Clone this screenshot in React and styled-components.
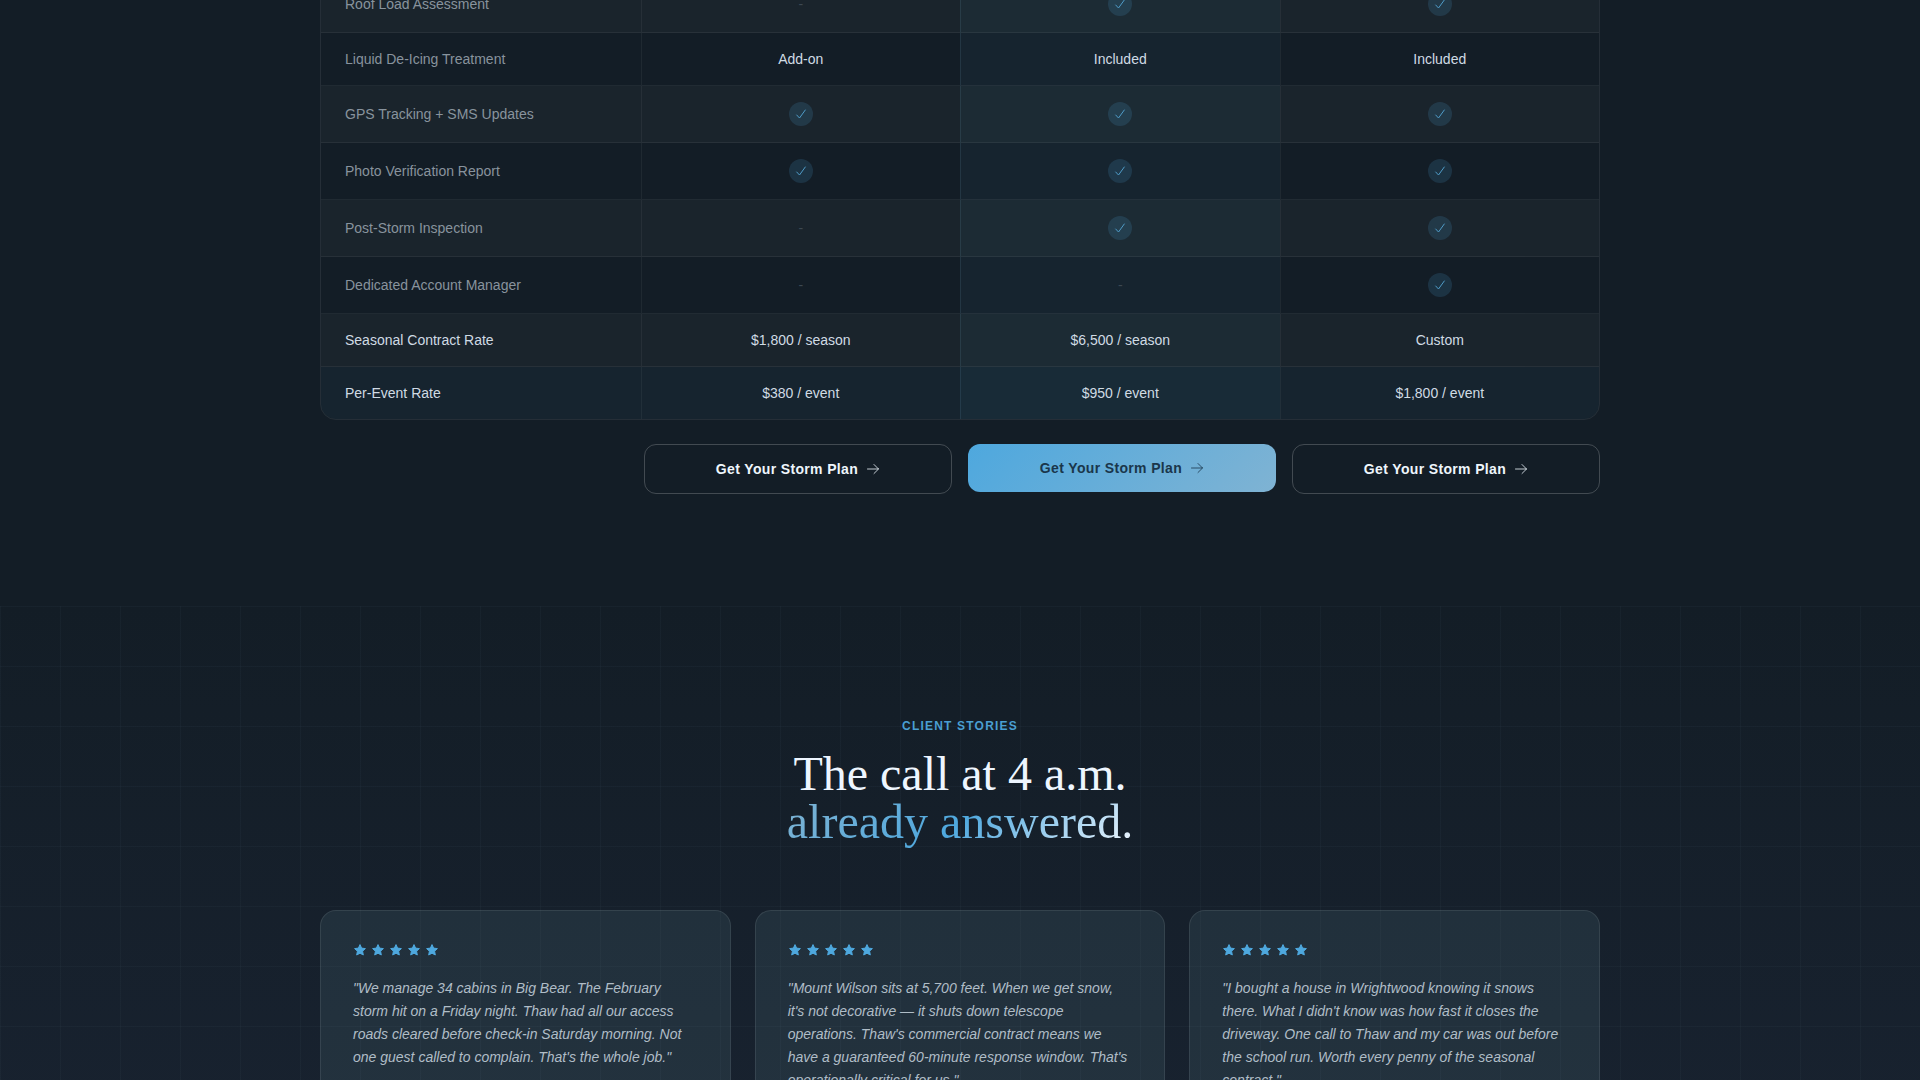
import React from "react";
import styled, { createGlobalStyle, css } from "styled-components";

const GlobalStyle = createGlobalStyle`
  *,
  *::before,
  *::after {
    box-sizing: border-box;
  }

  body {
    margin: 0;
    background: #131d26;
    color: #e6f1fa;
    font-family: "Liberation Sans", Arial, sans-serif;
    font-size: 14px;
  }
`;

const Page = styled.main`
  height: 100vh;
  overflow: hidden;
`;

const Container = styled.div`
  width: 100%;
  max-width: 1280px;
  margin: 0 auto;
`;

const PlansSection = styled.section`
  padding-bottom: 112px;
  background: #131d26;
`;

/* scrolled so that the first visible row is cut by the window edge */
const TableFrame = styled.div`
  margin-top: -25px;
  border: 1px solid rgba(255, 255, 255, 0.08);
  border-radius: 16px;
  overflow: hidden;
`;

const Table = styled.table`
  width: 100%;
  table-layout: fixed;
  border-collapse: separate;
  border-spacing: 0;
`;

const Row = styled.tr`
  background: ${({ $tone }) =>
    $tone === "event"
      ? "rgba(78, 168, 222, 0.05)"
      : $tone === "light"
        ? "rgba(255, 255, 255, 0.03)"
        : "transparent"};

  &:not(:last-child) > * {
    border-bottom: 1px solid rgba(255, 255, 255, 0.06);
  }
`;

const Feature = styled.th`
  padding: 16px 24px;
  text-align: left;
  font-weight: 400;
  line-height: 20px;
  color: ${({ $strong }) => ($strong ? "#d0dbe4" : "#88939d")};
`;

const Cell = styled.td`
  padding: ${({ $tick }) => ($tick ? "16px 24px" : "0 24px")};
  text-align: center;
  line-height: ${({ $tick }) => ($tick ? "24px" : "20px")};
  color: #d0dbe4;
  border-left: 1px solid rgba(255, 255, 255, 0.05);
  ${({ $featured }) =>
    $featured &&
    css`
      background: rgba(78, 168, 222, 0.05);
      border-left-color: rgba(126, 180, 211, 0.12);
    `}
`;

const Tick = styled.span`
  display: inline-flex;
  align-items: center;
  justify-content: center;
  width: 24px;
  height: 24px;
  border-radius: 50%;
  background: rgba(78, 168, 222, 0.16);
  color: #4f9cc8;
  vertical-align: top;
`;

const Dash = styled.span`
  color: #3c4852;
`;

const PlanActions = styled.div`
  display: grid;
  grid-template-columns: repeat(4, 1fr);
  align-items: start;
  gap: 16px;
  margin-top: 24px;

  > :first-child {
    grid-column-start: 2;
  }
`;

const PlanButton = styled.button`
  display: flex;
  align-items: center;
  justify-content: center;
  gap: 8px;
  padding: 14px 24px;
  border: 1px solid rgba(255, 255, 255, 0.2);
  border-radius: 12px;
  background: transparent;
  color: #eef6fc;
  font-family: inherit;
  font-size: 14px;
  font-weight: 700;
  line-height: 20px;
  letter-spacing: 0.025em;
  cursor: pointer;
  ${({ $primary }) =>
    $primary &&
    css`
      border: none;
      background: linear-gradient(135deg, #4ea8de 0%, #7fb3d3 100%);
      color: #1a364b;
    `}
`;

const StoriesSection = styled.section`
  min-height: 720px;
  padding: 112px 0;
  background-color: #131d26;
  background-image:
    linear-gradient(rgba(160, 190, 210, 0.035) 1px, transparent 1px),
    linear-gradient(90deg, rgba(160, 190, 210, 0.035) 1px, transparent 1px),
    linear-gradient(180deg, #131d26 0%, #1a2433 100%);
  background-size:
    60px 60px,
    60px 60px,
    100% 100%;
`;

const Eyebrow = styled.p`
  margin: 0 0 16px;
  text-align: center;
  color: #4a9fd2;
  font-size: 12px;
  font-weight: 700;
  line-height: 16px;
  letter-spacing: 0.1em;
  text-transform: uppercase;
`;

const Title = styled.h2`
  margin: 0 0 64px;
  text-align: center;
  color: #eef6ff;
  font-family: "Liberation Serif", "Times New Roman", serif;
  font-size: 48px;
  font-weight: 400;
  line-height: 48px;
`;

const TitleAccent = styled.span`
  background: linear-gradient(135deg, #7fb3d3 0%, #4ea8de 50%, #f0f7ff 100%);
  background-clip: text;
  color: transparent;
`;

const StoryGrid = styled.div`
  display: grid;
  grid-template-columns: repeat(3, 1fr);
  gap: 24px;
`;

const StoryCard = styled.article`
  padding: 32px;
  border: 1px solid rgba(255, 255, 255, 0.09);
  border-radius: 16px;
  background: rgba(130, 180, 190, 0.11);
`;

const Stars = styled.div`
  display: flex;
  gap: 4px;
  margin-bottom: 20px;
  color: #4ea8de;
`;

const Quote = styled.blockquote`
  margin: 0;
  color: #b0bdc7;
  font-size: 14px;
  font-style: italic;
  line-height: 23px;
`;

const CheckIcon = () => (
  <svg width="12" height="12" viewBox="0 0 12 12" fill="none" aria-hidden="true">
    <path
      d="M1.7 7 4.5 10 10.3 2"
      stroke="currentColor"
      strokeLinecap="round"
      strokeLinejoin="round"
    />
  </svg>
);

const ArrowIcon = () => (
  <svg width="14" height="14" viewBox="0 0 14 14" fill="none" aria-hidden="true">
    <path
      d="M1.5 7h11M8 2.5 12.5 7 8 11.5"
      stroke="currentColor"
      strokeOpacity="0.8"
      strokeLinecap="round"
      strokeLinejoin="round"
    />
  </svg>
);

const StarIcon = () => (
  <svg width="14" height="14" viewBox="0 0 14 14" fill="currentColor" aria-hidden="true">
    <path
      d="M7 1.6l1.6 3.5 3.8.5-2.8 2.6.7 3.8L7 10.2 3.7 12l.7-3.8-2.8-2.6 3.8-.5z"
      stroke="currentColor"
      strokeLinejoin="round"
    />
  </svg>
);

const rows = [
  { label: "Roof Load Assessment", values: [false, true, true], tone: "light" },
  { label: "Liquid De-Icing Treatment", values: ["Add-on", "Included", "Included"] },
  { label: "GPS Tracking + SMS Updates", values: [true, true, true], tone: "light" },
  { label: "Photo Verification Report", values: [true, true, true] },
  { label: "Post-Storm Inspection", values: [false, true, true], tone: "light" },
  { label: "Dedicated Account Manager", values: [false, false, true] },
  {
    label: "Seasonal Contract Rate",
    values: ["$1,800 / season", "$6,500 / season", "Custom"],
    tone: "light",
    strong: true,
  },
  {
    label: "Per-Event Rate",
    values: ["$380 / event", "$950 / event", "$1,800 / event"],
    tone: "event",
    strong: true,
  },
];

const stories = [
  "\"We manage 34 cabins in Big Bear. The February storm hit on a Friday night. Thaw had all our access roads cleared before check-in Saturday morning. Not one guest called to complain. That's the whole job.\"",
  "\"Mount Wilson sits at 5,700 feet. When we get snow, it's not decorative — it shuts down telescope operations. Thaw's commercial contract means we have a guaranteed 60-minute response window. That's operationally critical for us.\"",
  "\"I bought a house in Wrightwood knowing it snows there. What I didn't know was how fast it closes the driveway. One call to Thaw and my car was out before the school run. Worth every penny of the seasonal contract.\"",
];

const PlanValue = ({ value }) => {
  if (value === true) {
    return (
      <Tick role="img" aria-label="Yes">
        <CheckIcon />
      </Tick>
    );
  }
  if (value === false) {
    return <Dash>-</Dash>;
  }
  return value;
};

const PlanTable = () => (
  <TableFrame>
    <Table>
      <tbody>
        {rows.map((row) => (
          <Row key={row.label} $tone={row.tone}>
            <Feature scope="row" $strong={row.strong}>
              {row.label}
            </Feature>
            {row.values.map((value, index) => (
              <Cell
                key={index}
                $featured={index === 1}
                $tick={value === true}
              >
                <PlanValue value={value} />
              </Cell>
            ))}
          </Row>
        ))}
      </tbody>
    </Table>
  </TableFrame>
);

const App = () => {
  return (
    <Page>
      <GlobalStyle />
      <PlansSection>
        <Container>
          <PlanTable />
          <PlanActions>
            {[false, true, false].map((primary, index) => (
              <PlanButton key={index} type="button" $primary={primary}>
                Get Your Storm Plan
                <ArrowIcon />
              </PlanButton>
            ))}
          </PlanActions>
        </Container>
      </PlansSection>
      <StoriesSection>
        <Container>
          <Eyebrow>Client Stories</Eyebrow>
          <Title>
            The call at 4 a.m.
            <br />
            <TitleAccent>already answered.</TitleAccent>
          </Title>
          <StoryGrid>
            {stories.map((story) => (
              <StoryCard key={story}>
                <Stars role="img" aria-label="5 out of 5 stars">
                  {[1, 2, 3, 4, 5].map((star) => (
                    <StarIcon key={star} />
                  ))}
                </Stars>
                <Quote>{story}</Quote>
              </StoryCard>
            ))}
          </StoryGrid>
        </Container>
      </StoriesSection>
    </Page>
  );
};

export default App;
